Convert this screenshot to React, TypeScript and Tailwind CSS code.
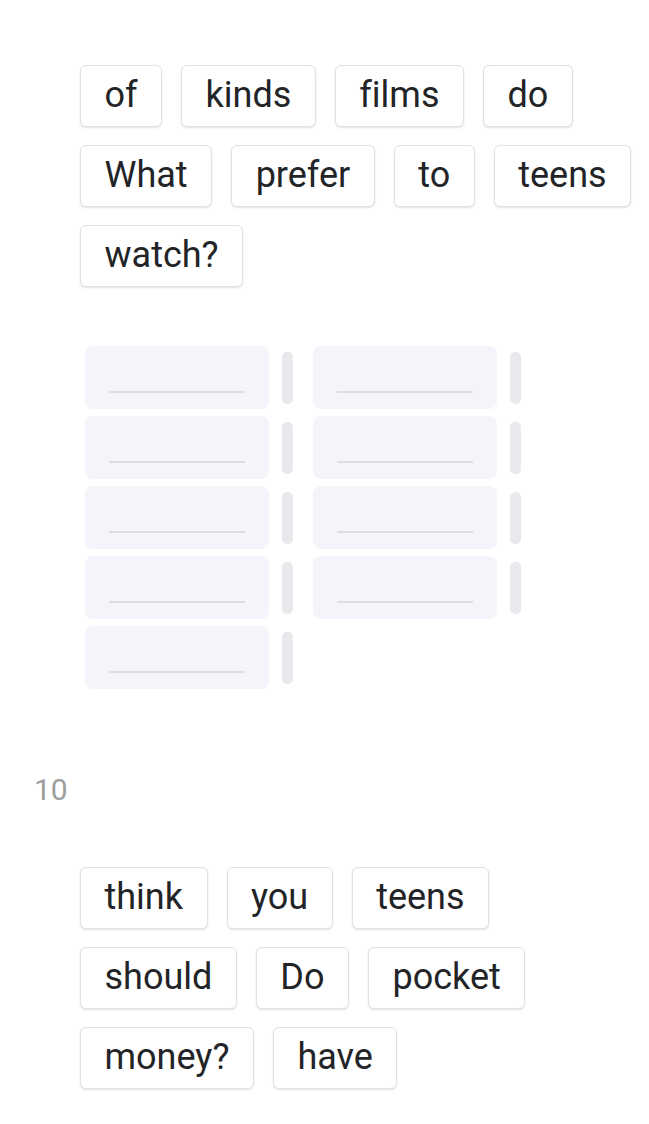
import React from 'react'

const groupA = ['of', 'kinds', 'films', 'do', 'What', 'prefer', 'to', 'teens', 'watch?']
const groupB = ['think', 'you', 'teens', 'should', 'Do', 'pocket', 'money?', 'have']

function Chip({ word }: { word: string }) {
  return (
    <div className="h-[62px] px-[23.5px] pb-[2px] flex items-center border border-[#e2e2e2] rounded-[6px] bg-white shadow-[0_1px_2px_rgba(0,0,0,0.12)] text-[36px] text-[#222427] leading-none [font-variant-ligatures:none]">
      {word}
    </div>
  )
}

function Slot() {
  return (
    <div className="flex items-center">
      <div className="w-[184px] h-[63px] rounded-[8px] bg-[#f4f5fa] flex items-end justify-center pb-[16px]">
        <div className="w-[136px] h-[2px] bg-[#dcdee3]" />
      </div>
      <div className="ml-[13px] w-[11px] h-[52px] rounded-[5px] bg-[#e7e9ec]" />
    </div>
  )
}

function Column({ count }: { count: number }) {
  return (
    <div className="flex flex-col gap-[7px]">
      {Array.from({ length: count }).map((_, i) => (
        <Slot key={i} />
      ))}
    </div>
  )
}

export default function App() {
  return (
    <div className="w-[649px] h-[1124px] bg-white overflow-hidden" style={{ fontFamily: 'Roboto, "Liberation Sans", sans-serif' }}>
      <div className="pt-[65px] pl-[80px] pr-[8px] flex flex-wrap gap-x-[19px] gap-y-[18px]">
        {groupA.map((w) => (
          <Chip key={w} word={w} />
        ))}
      </div>

      <div className="mt-[59px] pl-[85px] flex gap-[20px] items-start">
        <Column count={5} />
        <Column count={4} />
      </div>

      <div className="mt-[86px] pl-[34px] text-[30px] text-[#9e9e9e] leading-none">10</div>

      <div className="mt-[62px] pl-[80px] pr-[8px] flex flex-wrap gap-x-[19px] gap-y-[18px]">
        {groupB.map((w) => (
          <Chip key={w} word={w} />
        ))}
      </div>
    </div>
  )
}
